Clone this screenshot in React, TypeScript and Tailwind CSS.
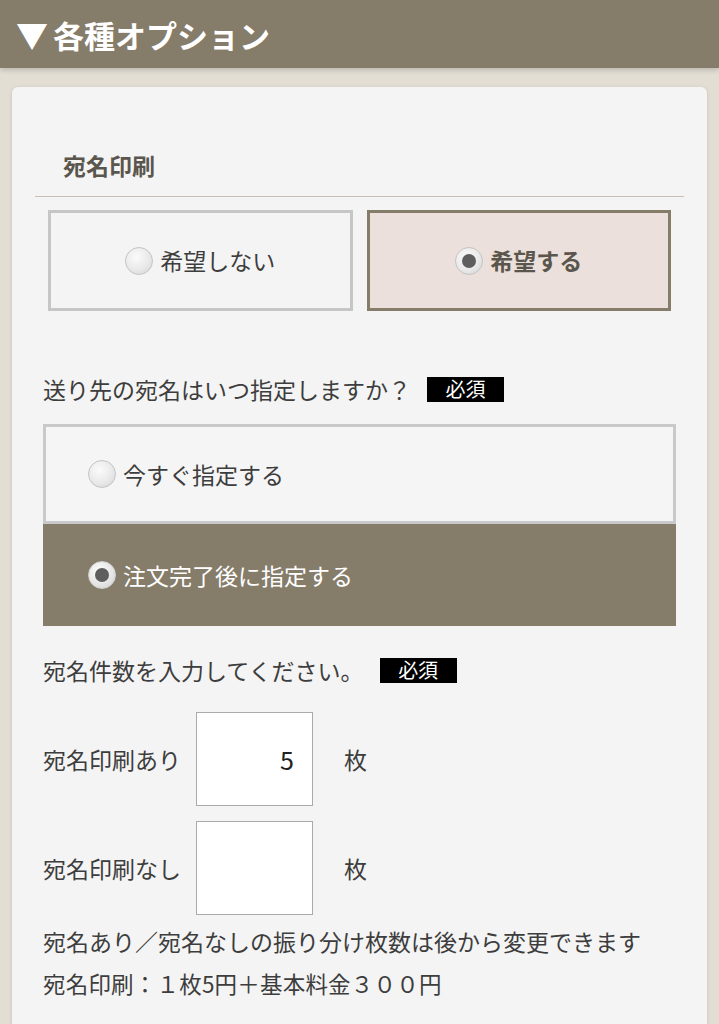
import React from "react";

function Radio({ checked, dark }: { checked?: boolean; dark?: boolean }) {
  return (
    <span
      className={
        "relative inline-flex h-[28px] w-[28px] shrink-0 items-center justify-center rounded-full border " +
        (dark
          ? "border-[#d0d0d0] bg-[radial-gradient(circle_at_40%_35%,#ffffff,#e6e6e6_55%,#cfcfcf)]"
          : "border-[#c4c4c4] bg-[radial-gradient(circle_at_40%_35%,#fbfbfb,#e9e9e9_55%,#d2d2d2)]")
      }
    >
      {checked && <span className="block h-[14px] w-[14px] rounded-full bg-[#5e5e5e]" />}
    </span>
  );
}

function Badge() {
  return (
    <span className="ml-[16px] inline-flex h-[25px] w-[77px] items-center justify-center bg-black text-[20px] leading-none text-white">
      必須
    </span>
  );
}

export default function App() {
  return (
    <div className="min-h-screen w-[719px] overflow-hidden bg-[#e3ded4] font-['Noto_Sans_CJK_JP','Noto_Sans',sans-serif] text-[#3d3d3d]">
      <div className="relative z-10 flex h-[68px] items-center bg-[#857c6a] pl-[16px] font-bold leading-none text-white shadow-[0_2px_5px_rgba(0,0,0,0.18)]">
        <span className="text-[32px]">▼</span>
        <span className="ml-[5px] text-[31px]">各種オプション</span>
      </div>

      <div className="mx-[12px] mt-[19px] rounded-[6px] bg-[#f4f4f4] pb-[40px] shadow-[0_1px_4px_rgba(0,0,0,0.12)]">
        <div className="pl-[51px] pt-[61px] text-[23px] font-bold leading-[34px] text-[#5b564d]">宛名印刷</div>
        <div className="mx-[23px] mt-[14px] border-t border-[#cbbfb3]" />

        <div className="mx-[36px] mt-[13px] grid grid-cols-2 gap-[14px]">
          <div className="flex h-[101px] items-center justify-center border-[3px] border-[#c6c6c6] bg-[#f4f4f4]">
            <Radio />
            <span className="ml-[7px] text-[23px] leading-none text-[#3d3d3d]">希望しない</span>
          </div>
          <div className="flex h-[101px] items-center justify-center border-[3px] border-[#857c6a] bg-[#ebe0db]">
            <Radio checked />
            <span className="ml-[7px] text-[23px] font-bold leading-none text-[#5b564d]">希望する</span>
          </div>
        </div>

        <div className="mx-[31px] mt-[62px] flex h-[32px] items-center text-[23px] leading-[32px]">
          <span>送り先の宛名はいつ指定しますか？</span>
          <Badge />
        </div>

        <div className="mx-[31px] mt-[19px]">
          <div className="flex h-[100px] items-center border-[3px] border-[#c9c9c9] bg-[#f5f5f5] pl-[42px]">
            <Radio />
            <span className="ml-[7px] text-[23px] leading-none">今すぐ指定する</span>
          </div>
          <div className="flex h-[102px] items-center bg-[#857c6a] pl-[45px]">
            <Radio checked dark />
            <span className="ml-[7px] text-[23px] leading-none text-white">注文完了後に指定する</span>
          </div>
        </div>

        <div className="mx-[31px] mt-[28px] flex h-[32px] items-center text-[23px] leading-[32px]">
          <span>宛名件数を入力してください。</span>
          <Badge />
        </div>

        <div className="mx-[31px] mt-[26px] flex flex-col gap-[15px]">
          <div className="flex items-center">
            <span className="w-[153px] text-[23px] leading-none">宛名印刷あり</span>
            <div className="flex h-[94px] w-[117px] items-center justify-end border border-[#aaaaaa] bg-white pr-[18px] text-[25px] leading-none text-[#222]">
              5
            </div>
            <span className="ml-[31px] text-[23px] leading-none">枚</span>
          </div>
          <div className="flex items-center">
            <span className="w-[153px] text-[23px] leading-none">宛名印刷なし</span>
            <div className="h-[94px] w-[117px] border border-[#aaaaaa] bg-white" />
            <span className="ml-[31px] text-[23px] leading-none">枚</span>
          </div>
        </div>

        <div className="mx-[31px] mt-[5px] text-[23px] leading-[42px]">宛名あり／宛名なしの振り分け枚数は後から変更できます</div>
        <div className="mx-[31px] text-[22.5px] leading-[42px] tracking-[0.2px]">宛名印刷：１枚5円＋基本料金３００円</div>
      </div>
    </div>
  );
}
